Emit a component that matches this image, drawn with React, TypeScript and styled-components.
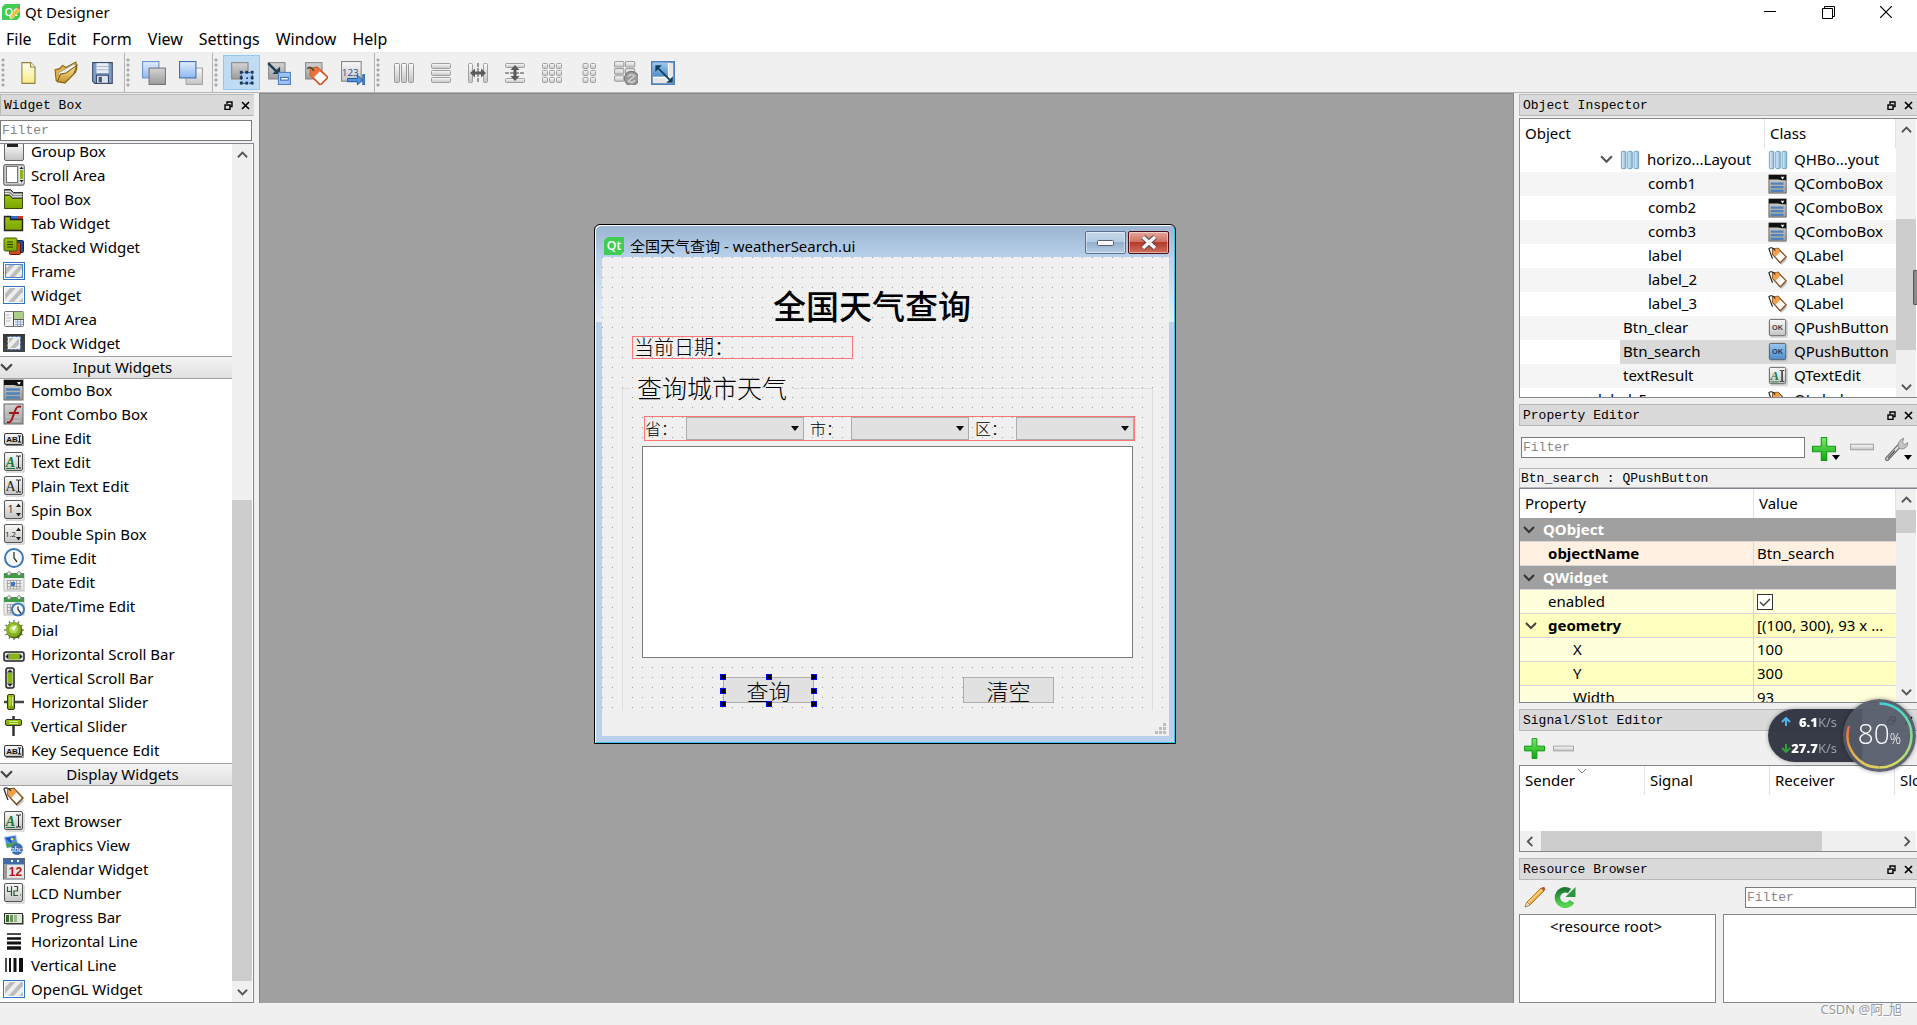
import React from 'react';
import styled, { createGlobalStyle, css } from 'styled-components';

const UI = '"Noto Sans", "Open Sans", "Noto Sans CJK SC", sans-serif';
const MONO = '"Liberation Mono", "DejaVu Sans Mono", "Noto Sans CJK SC", monospace';
const CJK = '"Noto Sans CJK SC", "Noto Sans", sans-serif';

const Global = createGlobalStyle`
  * { box-sizing: border-box; }
  html, body { margin: 0; padding: 0; height: 100%; }
  body { font-family: ${UI}; font-size: 15px; color: #000; background: #f0f0f0; overflow: hidden; }
  button, input, select, textarea { font: inherit; color: inherit; margin: 0; border-radius: 0; }
  button { padding: 0; border: 0; background: none; display: inline-flex; align-items: center; justify-content: center; }
  svg { display: block; flex: none; }
  ul { list-style: none; margin: 0; padding: 0; }
`;

/* ---------- drawings ---------- */

type Kids = { children?: React.ReactNode };
const Ic = ({ children, s = 22 }: Kids & { s?: number }) => (
  <svg width={s} height={s} viewBox="0 0 22 22" aria-hidden="true">{children}</svg>
);

const grad = (id: string, a: string, b: string, horizontal = false) => (
  <linearGradient id={id} x1="0" y1="0" x2={horizontal ? 1 : 0} y2={horizontal ? 0 : 1}>
    <stop offset="0" stopColor={a} /><stop offset="1" stopColor={b} />
  </linearGradient>
);

const HiddenSvg = styled.svg`position: absolute; pointer-events: none;`;
const Defs = () => (
  <HiddenSvg width="0" height="0" aria-hidden="true">
    <defs>
      {grad('gGrey', '#fafafa', '#c4c4c4')}
      {grad('gMid', '#d4d4d4', '#9c9c9c')}
      {grad('gDark', '#8a8a8a', '#d8d8d8')}
      {grad('gBlue', '#e2ecfb', '#8fb8f2')}
      {grad('gSky', '#9cc7ee', '#4d8bc9')}
      {grad('gCol', '#e4f2fb', '#7fb5da', true)}
      {grad('gGreen', '#7ce86c', '#08a808')}
      {grad('gLime', '#9ac40c', '#7ba400')}
      {grad('gGold', '#fbe9a8', '#c89427')}
      {grad('gPaper', '#fffef0', '#fbe985')}
      {grad('gReload', '#1a7a34', '#58d452')}
      <pattern id="pStripe" width="8" height="8" patternUnits="userSpaceOnUse" patternTransform="rotate(42)">
        <rect width="8" height="8" fill="#eee" /><rect width="4" height="8" fill="#bdbdbd" />
      </pattern>
      <linearGradient id="gRing" x1="0" y1="0" x2="0" y2="1">
        <stop offset="0" stopColor="#3fd6d0" /><stop offset=".6" stopColor="#8fe08a" /><stop offset="1" stopColor="#dcd860" />
      </linearGradient>
      <linearGradient id="gRing2" x1="0" y1="0" x2="0" y2="1">
        <stop offset="0" stopColor="#f0683c" /><stop offset="1" stopColor="#dcd05c" />
      </linearGradient>
    </defs>
  </HiddenSvg>
);

const Chevron = ({ dir = 'down', size = 12, color = '#555' }: { dir?: 'up' | 'down' | 'left' | 'right'; size?: number; color?: string }) => {
  const d = { up: 'M1 9L6 4L11 9', down: 'M1 3L6 8L11 3', left: 'M8 1L3 6L8 11', right: 'M4 1L9 6L4 11' }[dir];
  return <svg width={size} height={size} viewBox="0 0 12 12" aria-hidden="true"><path d={d} fill="none" stroke={color} strokeWidth="2" /></svg>;
};

const QtLogo = ({ pencil, w = 18 }: { pencil?: boolean; w?: number }) => (
  <svg width={w} height={w - 2} viewBox="0 0 18 16" aria-hidden="true">
    <path d="M3 0H18V13L15 16H0V3Z" fill="#41cd52" />
    <text x="9" y="12" fontSize="11" fontFamily="Open Sans, sans-serif" fontWeight="600" fill="#fff" textAnchor="middle">Qt</text>
    {pencil && <><path d="M15 4L18 6L11 14L8 15L9 11Z" fill="#f5b93c" stroke="#fff0c0" strokeWidth=".7" /><path d="M16 3L18 5" stroke="#d8694c" strokeWidth="2" /></>}
  </svg>
);

const Frame = ({ inner }: { inner?: boolean }) => (
  <Ic><rect x=".5" y="2.5" width="21" height="17" fill="#fff" stroke="#2f74c4" /><rect x="2" y="4" width="18" height="14" fill="url(#pStripe)" />{inner && <rect x="2.5" y="4.5" width="17" height="13" fill="none" stroke="#4c86cc" />}</Ic>
);
const Tile = ({ children, fill = 'url(#gGrey)' }: Kids & { fill?: string }) => (
  <Ic><path d="M3 21H21V3" fill="none" stroke="#bbb" /><rect x="1.5" y="1.5" width="18" height="18" rx="1.5" fill={fill} stroke="#555" />{children}</Ic>
);
const IBeam = () => <path d="M13 5h2q.5 0 .5 1v10q0 1-.5 1h-2M18 5h-2q-.5 0-.5 1v10q0 1 .5 1h2" fill="none" stroke="#222" strokeWidth="1" />;
const TextTile = ({ plain }: { plain?: boolean }) => (
  <Tile><text x="7.5" y="15.5" fontSize="14" textAnchor="middle" fontFamily="Liberation Serif, serif" fontStyle={plain ? 'normal' : 'italic'} fontWeight={plain ? 400 : 700} fill={plain ? '#222' : '#1d7a35'}>A</text>{!plain && <path d="M3 17.5H12" stroke="#1d7a35" />}<IBeam /></Tile>
);
const SpinTile = ({ t }: { t: string }) => (
  <Tile><text x="7.5" y="14" fontSize={t.length > 1 ? 8 : 10} textAnchor="middle" fontFamily="Open Sans, sans-serif" fill="#222">{t}</text><path d="M13 8L15.5 4.5L18 8ZM13 14L15.5 17.5L18 14Z" fill="#222" /></Tile>
);
const Abi = () => (
  <Ic><path d="M3 18.5H20.5V9" fill="none" stroke="#888" /><rect x="1.5" y="6.5" width="18" height="11" rx="1.5" fill="url(#gGrey)" stroke="#333" /><text x="9" y="14.5" fontSize="8" fontWeight="700" textAnchor="middle" fontFamily="Liberation Sans, sans-serif" fill="#111">AB</text><path d="M15 9h3M16.5 9v6M15 15h3" stroke="#111" /></Ic>
);
const Combo = () => (
  <Ic><rect x="1" y="1" width="19" height="20" fill="url(#gMid)" stroke="#666" /><path d="M1 1H20V7H15L11 6H1Z" fill="#111" /><path d="M14 3h4l-2 3Z" fill="#fff" /><path d="M3 10.5H17M3 14.5H17M3 18.5H17" stroke="#4e82b8" strokeWidth="2.5" /></Ic>
);
const FontCombo = () => (
  <Ic><rect x="1" y="1" width="19" height="20" fill="url(#gMid)" stroke="#666" /><path d="M3 10h14M3 14h14M3 18h14" stroke="#bdbdbd" strokeWidth="2" /><path d="M18 4q-4-2-6 4l-3 8q-1 4-5 3M6 10h10" fill="none" stroke="#a3161a" strokeWidth="2" /></Ic>
);
const Tag = () => (
  <Ic><path d="M6 9L11 5L21 15L15 21Z" fill="#999" opacity=".5" /><path d="M5 3L11 2.5L20 12L13.5 18.5L5 9Z" fill="#fff" stroke="#4a3018" strokeWidth="1.3" /><path d="M5 3L11 2.5L14 6L8 12L5 9Z" fill="#f0a04a" /><path d="M13 5L19.5 12L13.5 18L8 12" fill="none" stroke="#c8701c" /><path d="M8 5Q4 0 1 3Q3 9 5 14" fill="none" stroke="#222" strokeWidth="1.2" /></Ic>
);
const Clock = ({ x = 11, y = 11, r = 9 }: { x?: number; y?: number; r?: number }) => (
  <g><circle cx={x} cy={y} r={r} fill="#f4f6f8" stroke="#3c78b8" strokeWidth="2" /><path d={`M${x} ${y - r + 3}V${y}L${x + 3} ${y + 4}`} fill="none" stroke="#333" strokeWidth="1.3" /></g>
);
const CalBase = () => (
  <g><rect x="1" y="3" width="20" height="17" fill="#ececec" stroke="#bbb" /><rect x="1" y="2" width="20" height="5" fill="#3d9c45" /><circle cx="6" cy="2.5" r="1.8" fill="#eee" stroke="#888" /><circle cx="16" cy="2.5" r="1.8" fill="#eee" stroke="#888" /><path d="M3.5 9.5H18.5M3.5 12.5H18.5M3.5 15.5H18.5M3.5 18H18.5M4.5 9V18M7.5 9V18M10.5 9V18M13.5 9V18M17 9V18" stroke="#a9a9a9" /></g>
);
const Bars3 = ({ fill = 'url(#gGrey)', stroke = '#999' }: { fill?: string; stroke?: string }) => (
  <Ic><rect x="1.5" y="1.5" width="5" height="19" rx="1" fill={fill} stroke={stroke} /><rect x="8.5" y="1.5" width="5" height="19" rx="1" fill={fill} stroke={stroke} /><rect x="15.5" y="1.5" width="5" height="19" rx="1" fill={fill} stroke={stroke} /></Ic>
);
const Ok = ({ blue }: { blue?: boolean }) => (
  <Tile fill={blue ? 'url(#gSky)' : 'url(#gGrey)'}><text x="10.5" y="13" fontSize="8" fontWeight="700" textAnchor="middle" fontFamily="Liberation Sans, sans-serif" fill={blue ? '#173f66' : '#444'}>OK</text></Tile>
);
const Dial = () => {
  const ticks = Array.from({ length: 12 }, (_, i) => i * 30);
  return <Ic>{ticks.map(a => <path key={a} d="M11 1V4" stroke="#666" strokeWidth="1.2" transform={`rotate(${a} 11 11)`} />)}<circle cx="11.5" cy="11.5" r="8" fill="#4c6a0c" /><circle cx="10.5" cy="10.5" r="7.5" fill="#86b022" /><circle cx="10.5" cy="10" r="4.5" fill="#b2d858" /><path d="M8 9L14 6L11 12Z" fill="#fff" /></Ic>;
};

const icons: Record<string, React.ReactNode> = {
  group: <Ic><rect x="1.5" y="3.5" width="19" height="17" rx="1.5" fill="url(#gGrey)" stroke="#666" /><rect x="4" y="3" width="11" height="4" fill="#222" /></Ic>,
  scroll: <Ic><rect x=".7" y=".7" width="20.5" height="20.5" rx="1.5" fill="#c9c9c9" stroke="#555" /><rect x="3.5" y="2.5" width="11" height="16" fill="#fff" stroke="#777" /><rect x="16" y="2" width="4.5" height="17" fill="#e8e8e8" /><rect x="17" y="6" width="3" height="9" fill="#8ab414" /><path d="M16.5 5L18.5 2.5L20.5 5ZM16.5 16L18.5 18.5L20.5 16Z" fill="#222" /></Ic>,
  toolbox: <Ic><path d="M1.5 1.5h6l3 3h9v6H1.5Z" fill="#8d8d8d" stroke="#333" /><path d="M1.500 3.5h6l3 3h9M1.5 5.5h5l3 3h10" fill="none" stroke="#ddd" /><path d="M1.5 7.5h5l3 3h10v10h-18Z" fill="url(#gLime)" stroke="#3a4a08" /></Ic>,
  tab: <Ic><rect x="8" y="4" width="6" height="4" fill="#2d6cd0" /><rect x="14" y="4" width="6" height="4" fill="#d43a22" /><path d="M1.5 4.5h6v3h12v11h-18Z" fill="url(#gLime)" stroke="#222" strokeWidth="1.4" /></Ic>,
  stacked: <Ic><rect x="10.5" y="4.5" width="10" height="12" rx="1" fill="#1d50a8" stroke="#12264a" /><rect x="6.5" y="6.5" width="11" height="12" rx="1" fill="#d04a1a" stroke="#5a1c08" /><rect x="1" y="2" width="13" height="13" rx="1.5" fill="url(#gLime)" stroke="#44560a" /><path d="M4 6h6M4 8.5h6M4 11h6" stroke="#2d3a06" /></Ic>,
  frame: <Frame inner />,
  widget: <Frame />,
  mdi: <Ic><rect x="1.5" y="3.5" width="19" height="15" rx="1" fill="#f2f2f2" stroke="#777" /><rect x="11" y="4" width="9.5" height="7" fill="#a9cf88" /><path d="M10.5 4v14M11 11.5h9.5" stroke="#555" /><path d="M3 7h3M3 10h5M3 13h4" stroke="#bbb" /><path d="M12 14h8M12 16.5h8M14.5 12v6M17.5 12v6" stroke="#93a9d8" /></Ic>,
  dock: <Ic><rect y="2" width="22" height="18" fill="url(#gDark)" /><rect y="2" width="22" height="18" fill="#222" opacity=".8" /><rect x="4.5" y="4.5" width="13" height="13" fill="#eee" stroke="#2b62b4" strokeDasharray="2 2" /><rect x="6" y="6" width="10" height="10" fill="url(#pStripe)" /></Ic>,
  combo: <Combo />,
  fontcombo: <FontCombo />,
  abi: <Abi />,
  text: <TextTile />,
  plain: <TextTile plain />,
  spin: <SpinTile t="1" />,
  dspin: <SpinTile t="1.2" />,
  time: <Ic><Clock /></Ic>,
  date: <Ic><CalBase /><rect x="8" y="11" width="4" height="4" fill="#3c7ad0" /></Ic>,
  datetime: <Ic><CalBase /><Clock x={15} y={14.5} r={6} /></Ic>,
  dial: <Dial />,
  hscroll: <Ic><rect x="1" y="9" width="20" height="9" rx="2" fill="#ddd" stroke="#222" strokeWidth="1.5" /><rect x="6" y="10.5" width="10" height="6" fill="#8ab414" /><path d="M5.5 10.5v6L2.5 13.5ZM16.5 10.5v6L19.5 13.5Z" fill="#222" /></Ic>,
  vscroll: <Ic><rect x="3" y="1" width="8" height="20" rx="2" fill="#ddd" stroke="#222" strokeWidth="1.5" /><rect x="4.5" y="6" width="5" height="10" fill="#8ab414" /><path d="M4 5.5h6L7 2.5ZM4 16.5h6L7 19.5Z" fill="#222" /></Ic>,
  hslider: <Ic><path d="M1 11H21" stroke="#444" strokeWidth="2.5" /><rect x="4.5" y="3.5" width="7" height="15" rx="1.5" fill="url(#gLime)" stroke="#333" /><path d="M7 6v9M9.5 6v9" stroke="#d6ee8c" /></Ic>,
  vslider: <Ic><path d="M10.5 1V21" stroke="#333" strokeWidth="2.5" /><rect x="2.5" y="4.5" width="16" height="6" rx="1.5" fill="url(#gLime)" stroke="#333" /><path d="M6 6.5h9M6 8.5h9" stroke="#d6ee8c" /></Ic>,
  label: <Tag />,
  graphics: <Ic><path d="M1 3L13 1L15 11L4 14Z" fill="#4a90e0" stroke="#cfe2f6" /><path d="M2 4L12 2.5L8 9Z" fill="#1e50c8" /><circle cx="9" cy="5" r="1.5" fill="#f2e24c" /><path d="M3 10L14 8L15 11L4 14Z" fill="#4fa34a" /><circle cx="14" cy="15" r="6" fill="#3d6fae" /><text x="13" y="18" fontSize="9" fontStyle="italic" fontFamily="Liberation Serif, serif" textAnchor="middle" fill="#fff">abc</text></Ic>,
  calendar: <Ic><rect x=".5" y=".5" width="21" height="20.5" fill="#e6e6e6" stroke="#666" /><rect x="1" y="1" width="20" height="5.5" fill="#3f6ca8" /><path d="M8 3h2M14 3h2" stroke="#fff" strokeWidth="2" /><rect x="1" y="6" width="3" height="14.5" fill="#999" /><text x="12.5" y="18" fontSize="12" fontWeight="700" fontFamily="Liberation Sans, sans-serif" textAnchor="middle" fill="#b51616">12</text></Ic>,
  lcd: <Tile><path d="M4.5 4.5V9.5H8.5M8.5 4V14M11 4.5H14.5V9H11V13.5H15M17 13h1" fill="none" stroke="#2f5a2f" strokeWidth="1.2" /></Tile>,
  progress: <Ic><rect x="1.5" y="7.5" width="18" height="10" fill="#dfe6da" stroke="#333" /><path d="M4.5 9v7" stroke="#3b6b2c" strokeWidth="3" /><path d="M8.500 9v7" stroke="#6a9358" strokeWidth="3" /><path d="M12.5 9v7" stroke="#9cb892" strokeWidth="3" /><path d="M3 18.5h17.500V9" fill="none" stroke="#999" /></Ic>,
  hline: <Ic><path d="M4 4h14" stroke="#111" strokeWidth="1.5" /><path d="M4 8.5h14" stroke="#111" strokeWidth="2.5" /><path d="M4 13h14" stroke="#111" strokeWidth="3" /><path d="M4 18h14" stroke="#111" strokeWidth="3.5" /></Ic>,
  vline: <Ic><path d="M3 4v14" stroke="#111" strokeWidth="1.5" /><path d="M7 4v14" stroke="#111" strokeWidth="2" /><path d="M12 4v14" stroke="#111" strokeWidth="3" /><path d="M18 4v14" stroke="#111" strokeWidth="4" /></Ic>,
  hbox: <Bars3 fill="url(#gCol)" stroke="#6d9cbd" />,
  ok: <Ok />,
  okblue: <Ok blue />,
};

const grid = (cols: number[], rows: number[], w: number, h: number) =>
  cols.flatMap(x => rows.map(y => <rect key={`${x}-${y}`} x={x} y={y} width={w} height={h} rx="1" fill="url(#gGrey)" stroke="#a0a0a0" />));
const Gray = <rect x="1.5" y="1.5" width="15" height="15" fill="url(#gMid)" stroke="#8a8a8a" />;

const tool: Record<string, React.ReactNode> = {
  new: <Ic s={24}><path d="M4.5 1.5h8l4 4v15h-12Z" fill="url(#gPaper)" stroke="#8d8040" /><path d="M12.5 1.5v4h4" fill="#fff" stroke="#8d8040" /></Ic>,
  open: <Ic s={24}><path d="M1 8L5 7L8 4L11 6L20 1L21 6L20 10L10 20L2 18Z" fill="#e0b04c" stroke="#8a6416" /><path d="M4 11L18 3L20 4L19 9L6 16Z" fill="#f6f6f4" stroke="#999" strokeWidth=".7" /><path d="M3 19L6 12L11 11L21 4L18 12L10 20Z" fill="url(#gGold)" stroke="#8a6416" /></Ic>,
  save: <Ic s={24}><path d="M1.5 1.5h18v19h-16l-2-2Z" fill="#7f9cc6" stroke="#3d4d68" /><rect x="5" y="2" width="11" height="9" fill="#e9eef5" /><path d="M5 5h11M5 8h11" stroke="#a9b8cc" /><rect x="5" y="13" width="11" height="7.5" fill="#dde3ea" stroke="#37496a" /><rect x="7" y="14.5" width="3" height="5" fill="#42557a" /></Ic>,
  back: <Ic s={24}><rect x=".5" y=".5" width="15" height="15" fill="url(#gBlue)" stroke="#6b93cc" /><rect x="6.5" y="6.5" width="15" height="15" fill="url(#gMid)" stroke="#777" /></Ic>,
  front: <Ic s={24}><rect x="6.5" y="6.5" width="15" height="15" fill="url(#gGrey)" stroke="#a5a5a5" /><rect x=".5" y=".5" width="15" height="15" fill="url(#gBlue)" stroke="#3f6fb4" /></Ic>,
  edit: <Ic s={24}>{Gray}<rect x="10.5" y="10.5" width="10" height="10" fill="#a9cdf8" stroke="#2d5a96" strokeDasharray="2 1" />{[9, 14, 19].flatMap(x => [9, 14, 19].map(y => x === 14 && y === 14 ? <rect key="c" x="15" y="15" width="1.5" height="1.5" fill="#1f3558" /> : <rect key={`${x}${y}`} x={x} y={y} width="2.6" height="2.6" fill="#1f3558" />))}</Ic>,
  signals: <Ic s={24}>{Gray}<path d="M1 2L9 10" stroke="#223d5c" strokeWidth="2.200" /><path d="M12 12V5L5 12Z" fill="#223d5c" /><rect x="10.5" y="10.5" width="11" height="11" fill="#9dc3f4" stroke="#5580b8" /><rect x="12.500" y="15" width="7" height="2.500" fill="#fff" stroke="#3a6db0" /></Ic>,
  buddies: <Ic s={24}>{Gray}<path d="M6 7L12 6L22 15L15 22L6 13Z" fill="#fff" stroke="#d4541c" strokeWidth="1.6" /><path d="M6 7L12 6L15 9L8.5 15.5L6 13Z" fill="#e8743c" /><path d="M9 9Q6 4 3 7" fill="none" stroke="#444" strokeWidth="1.4" /></Ic>,
  taborder: <Ic s={24}><rect x=".5" y=".5" width="18" height="18" fill="url(#gGrey)" stroke="#888" /><text x="8.5" y="14" fontSize="9" textAnchor="middle" fontFamily="Open Sans, sans-serif" fill="#1f4f94">123</text><path d="M6 16h9v-3l5 4.5l-5 4.5v-3h-9ZM20 12.5h2v9.5h-2Z" fill="#4f94dc" stroke="#1f4f94" strokeWidth=".8" /></Ic>,
  lh: <Bars3 />,
  lv: <Ic>{grid([1.5], [1.5, 8.5, 15.5], 19, 5)}</Ic>,
  sh: <Ic>{grid([1.5, 16.5], [1.5], 4, 19)}<path d="M11 1v20" stroke="#999" strokeDasharray="4 1" strokeWidth="2" /><path d="M3 11L8 6.5V9.5H14V6.5L19 11L14 15.5V12.5H8V15.5Z" fill="#5a5a5a" /></Ic>,
  sv: <Ic>{grid([1.5], [1.5, 16.5], 19, 4)}<path d="M1 11h20" stroke="#999" strokeDasharray="4 1" strokeWidth="2" /><path d="M11 3L6.5 8H9.5V14H6.5L11 19L15.5 14H12.5V8H15.5Z" fill="#5a5a5a" /></Ic>,
  grid: <Ic>{grid([1.5, 8.5, 15.5], [1.5, 8.5, 15.5], 5, 5)}</Ic>,
  form: <Ic>{grid([5, 12.5], [1.5, 8.5, 15.5], 5, 5)}</Ic>,
  brk: <Ic s={24}>{grid([0.5, 10.5], [0.5, 7, 13.5], 8.5, 5)}<circle cx="16" cy="16" r="6.5" fill="#9a9a9a" stroke="#7c7c7c" /><path d="M12.5 19L19.500 13M13 14.5a3.5 3.5 0 0 1 5-1.5M19 17.5a3.5 3.5 0 0 1-5 1.5" fill="none" stroke="#d5d5d5" strokeWidth="1.3" /></Ic>,
  adjust: <Ic s={24}><rect x=".8" y=".8" width="20.4" height="20.4" fill="#e6e6e6" stroke="#3a72b4" strokeWidth="1.4" /><rect x="1.5" y="1.5" width="14" height="13" fill="url(#gSky)" /><path d="M16 2v18M2 15h18" stroke="#fff" /><path d="M6 6L17 17" stroke="#12405c" strokeWidth="1.600" /><path d="M4 4H10L4 10ZM20 20H14L20 14Z" fill="#12405c" /></Ic>,
};

const Plus = ({ s = 22 }: { s?: number }) => <Ic s={s}><path d="M8.5.5h5v8h8v5h-8v8h-5v-8h-8v-5h8Z" fill="url(#gGreen)" stroke="#159a15" /></Ic>;
const Minus = ({ s = 22 }: { s?: number }) => <Ic s={s}><rect x=".5" y="8.5" width="21" height="5" fill="url(#gGrey)" stroke="#a4a4a4" /></Ic>;
const Wrench = () => <Ic s={24}><path d="M3 20L14 8" stroke="#666" strokeWidth="4" strokeLinecap="round" /><path d="M3 20L14 8" stroke="#ddd" strokeWidth="2" strokeLinecap="round" /><path d="M3.5 19.5L10 12.5" stroke="#444" strokeWidth="1" /><path d="M13 9Q12 4 18 1L17 5L19 7L22 5Q22 11 15 11Z" fill="#c4c4c4" stroke="#888" strokeWidth=".8" /></Ic>;
const PencilIc = () => <Ic><path d="M1 21L3 16L17 2L20 5L6 19Z" fill="#f2ab3a" stroke="#9a6a1c" strokeWidth=".8" /><path d="M4 17L18 3.5" stroke="#fbd48a" strokeWidth="1.5" /><path d="M1 21L3 16L6 19Z" fill="#f5e2c0" stroke="#777" strokeWidth=".6" /><path d="M17 2q3-2 4 0t-1 3Z" fill="#b5543c" /></Ic>;
const Reload = () => <Ic><path d="M18 15.500A7.800 7.800 0 1 1 15.500 5" fill="none" stroke="url(#gReload)" strokeWidth="5.500" /><path d="M21.5 1V11H11.5Z" fill="#2d9440" /></Ic>;
const Caret = () => <svg width="8" height="5" viewBox="0 0 8 5" aria-hidden="true"><path d="M0 0H8L4 5Z" fill="#000" /></svg>;
const FloatIc = () => <svg width="9" height="9" viewBox="0 0 9 9" aria-hidden="true"><path d="M3 3V1H8V5.5H6M1 4H6V8.5H1Z" fill="none" stroke="#000" strokeWidth="1.4" /></svg>;
const CloseIc = () => <svg width="9" height="9" viewBox="0 0 9 9" aria-hidden="true"><path d="M1 1L8 8M8 1L1 8" stroke="#000" strokeWidth="1.7" /></svg>;

/* ---------- shell ---------- */

const Page = styled.div`display: flex; flex-direction: column; height: 100vh; background: #f0f0f0;`;
const TitleBar = styled.header`display: flex; align-items: center; height: 24px; padding: 0 2px; background: #fff;`;
const AppName = styled.h1`flex: 1; margin: 0 0 0 5px; font-size: 15px; font-weight: 400; line-height: 22px;`;
const SysButton = styled.button`width: 58px; height: 24px;`;
const MenuBar = styled.nav`display: flex; height: 29px; padding: 2px 0 0 6px; gap: 16px; background: #fff; border-bottom: 1px solid #ececec; font-size: 16px;`;
const MenuItem = styled.button`line-height: 24px;`;
const ToolBar = styled.div`display: flex; height: 40px; background: #f0f0f0; border-bottom: 1px solid #b4b4b4;`;
const ToolGroup = styled.div`
  display: flex; align-items: center; padding-right: 3px;
  & + & { border-left: 1px solid #b4b4b4; }
`;
const Grip = styled.span`width: 10px; height: 30px; background: radial-gradient(circle at 3px 2px, #a8a8a8 1px, transparent 2px) 0 0 / 11px 5px;`;
const ToolButton = styled.button<{ $on?: boolean }>`
  width: 37px; height: 35px; border: 1px solid transparent;
  ${p => p.$on && css`background: #c0dcf3; border-color: #90c8f6;`}
`;
const Workspace = styled.main`display: grid; grid-template-columns: 259px minmax(0, 1fr) 403px; flex: 1; min-height: 0;`;
const StatusBar = styled.footer`display: flex; justify-content: flex-end; height: 22px; padding: 0 15px; font-size: 13px; line-height: 12px; color: #9b9b9b; text-shadow: 1px 1px 0 #fff;`;

/* ---------- docks ---------- */

const LeftDock = styled.aside`display: flex; flex-direction: column; min-height: 0; padding: 1px 5px 0 0;`;
const RightDock = styled.aside`display: flex; flex-direction: column; min-height: 0; padding: 1px 0 0 5px; gap: 6px; overflow: hidden;`;
const Panel = styled.section<{ $grow?: boolean }>`display: flex; flex-direction: column; min-height: 0; flex: ${p => (p.$grow ? '1 1 0' : 'none')};`;
const DockBar = styled.div`display: flex; align-items: center; height: 22px; flex: none; padding: 0 4px 0 3px; gap: 8px; background: #dadada; border: 1px solid #b9b9b9; border-right-width: 0;`;
const DockName = styled.h2`flex: 1; margin: 0; padding-top: 2px; font-family: ${MONO}; font-size: 13px; font-weight: 400; line-height: 18px;`;
const DockTitle = ({ name }: { name: string }) => (
  <DockBar><DockName>{name}</DockName><button aria-label={`Float ${name}`}><FloatIc /></button><button aria-label={`Close ${name}`}><CloseIc /></button></DockBar>
);
const FilterBox = styled.input<{ $w?: string }>`
  width: ${p => p.$w || 'auto'}; flex: none; height: 21px; padding: 0 1px; border: 1px solid #7a7a7a; background: #fff; outline: 0;
  font-family: ${MONO}; font-size: 13px;
  &::placeholder { color: #868686; opacity: 1; }
`;
const WidgetFilter = styled(FilterBox)`margin: 4px 2px 2px 0;`;
const Sunken = styled.div<{ $h?: number; $mt?: number }>`
  display: flex; min-height: 0; overflow: hidden; background: #fff; border: 1px solid #828790; border-right-width: 0;
  ${p => (p.$h ? css`height: ${p.$h}px;` : css`flex: 1 1 0;`)}
  margin-top: ${p => p.$mt || 0}px;
`;
const WidgetTree = styled(Sunken)`border-width: 1px 1px 1px 0;`;
const WidgetList = styled.ul`display: flex; flex-direction: column; justify-content: flex-end; flex: 1; overflow: hidden;`;
const WidgetRow = styled.li`display: flex; align-items: center; flex: none; height: 24px; padding: 0 0 2px 3px; gap: 6px; line-height: 22px;`;
const GroupRow = styled.li`display: flex; align-items: center; flex: none; height: 23px; padding-bottom: 1px; line-height: 20px; border: solid #a0a0a0; border-width: 1px 0; background: linear-gradient(#f4f4f4, #e0e0e0);`;
const GroupName = styled.span`flex: 1; text-align: center;`;

const Bar = styled.div<{ $row?: boolean }>`display: flex; flex-direction: ${p => (p.$row ? 'row' : 'column')}; flex: none; background: #f0f0f0; margin-right: 1px; ${p => (p.$row ? 'height: 20px; margin-top: auto;' : 'width: 20px;')}`;
const BarButton = styled.button`width: 20px; height: 20px; flex: none;`;
const Space = styled.span<{ $n: number }>`flex: ${p => p.$n} 1 0;`;
const Thumb = styled(Space)`background: #cdcdcd;`;
const ScrollBar = ({ row, parts }: { row?: boolean; parts: [number, number, number] }) => (
  <Bar $row={row}>
    <BarButton aria-label="Scroll back"><Chevron dir={row ? 'left' : 'up'} size={11} /></BarButton>
    <Space $n={parts[0]} /><Thumb $n={parts[1]} /><Space $n={parts[2]} />
    <BarButton aria-label="Scroll forward"><Chevron dir={row ? 'right' : 'down'} size={11} /></BarButton>
  </Bar>
);

const widgets: [string, string?][] = [
  ['Group Box', 'group'], ['Scroll Area', 'scroll'], ['Tool Box', 'toolbox'], ['Tab Widget', 'tab'], ['Stacked Widget', 'stacked'],
  ['Frame', 'frame'], ['Widget', 'widget'], ['MDI Area', 'mdi'], ['Dock Widget', 'dock'],
  ['Input Widgets'],
  ['Combo Box', 'combo'], ['Font Combo Box', 'fontcombo'], ['Line Edit', 'abi'], ['Text Edit', 'text'], ['Plain Text Edit', 'plain'],
  ['Spin Box', 'spin'], ['Double Spin Box', 'dspin'], ['Time Edit', 'time'], ['Date Edit', 'date'], ['Date/Time Edit', 'datetime'],
  ['Dial', 'dial'], ['Horizontal Scroll Bar', 'hscroll'], ['Vertical Scroll Bar', 'vscroll'], ['Horizontal Slider', 'hslider'],
  ['Vertical Slider', 'vslider'], ['Key Sequence Edit', 'abi'],
  ['Display Widgets'],
  ['Label', 'label'], ['Text Browser', 'text'], ['Graphics View', 'graphics'], ['Calendar Widget', 'calendar'], ['LCD Number', 'lcd'],
  ['Progress Bar', 'progress'], ['Horizontal Line', 'hline'], ['Vertical Line', 'vline'], ['OpenGL Widget', 'widget'],
];

/* ---------- tables ---------- */

const Table = styled.table`
  flex: 1; align-self: flex-start; min-width: 0; table-layout: fixed; border-collapse: separate; border-spacing: 0; line-height: 23px;
  th, td { padding: 0; font-weight: 400; text-align: left; white-space: nowrap; overflow: hidden; }
  thead th { height: 29px; padding-left: 5px; border-right: 1px solid #e2e2e2; background: #fff; }
`;
const ObjRow = styled.tr<{ $alt?: boolean }>`td { height: 24px; background: ${p => (p.$alt ? '#f5f5f5' : '#fff')}; }`;
const Cell = styled.div<{ $indent?: number; $sel?: boolean; $gap?: number }>`
  display: flex; align-items: center; height: 24px; gap: ${p => p.$gap ?? 7}px; margin-left: ${p => p.$indent || 0}px; padding: 0 0 1px 3px;
  background: ${p => (p.$sel ? '#d9d9d9' : 'transparent')};
  > svg[width="22"] { width: 20px; height: 20px; }
`;
const objects: { n: string; c: string; i: string; x: number; sel?: boolean }[] = [
  { n: 'comb1', c: 'QComboBox', i: 'combo', x: 125 }, { n: 'comb2', c: 'QComboBox', i: 'combo', x: 125 }, { n: 'comb3', c: 'QComboBox', i: 'combo', x: 125 },
  { n: 'label', c: 'QLabel', i: 'label', x: 125 }, { n: 'label_2', c: 'QLabel', i: 'label', x: 125 }, { n: 'label_3', c: 'QLabel', i: 'label', x: 125 },
  { n: 'Btn_clear', c: 'QPushButton', i: 'ok', x: 100 }, { n: 'Btn_search', c: 'QPushButton', i: 'okblue', x: 100, sel: true },
  { n: 'textResult', c: 'QTextEdit', i: 'text', x: 100 }, { n: 'label_5', c: 'QLabel', i: 'label', x: 75 },
];

const PropTools = styled.div`display: flex; align-items: center; height: 42px; padding-left: 2px; gap: 6px;`;
const MenuTool = styled.button`align-items: flex-end; width: 30px; height: 28px; svg + svg { margin: 0 0 1px -4px; }`;
const PlainTool = styled.button`width: 30px; height: 28px;`;
const ObjectInfo = styled.div`height: 20px; flex: none; padding-left: 1px; border: 1px solid #b9b9b9; border-right: 0; font-family: ${MONO}; font-size: 13px; line-height: 19px;`;
const PropHead = styled.tr`td { height: 24px; padding-left: 3px; background: #a0a0a0; border-bottom: 1px solid #d6d6dc; }`;
const HeadCell = styled.div`display: flex; align-items: center; gap: 8px; font-weight: 700; color: #fff; line-height: 23px;`;
const PropRow = styled.tr<{ $bg: string }>`
  td { height: 24px; background: ${p => p.$bg}; border-bottom: 1px solid #d6d6dc; }
  td:first-child { border-right: 1px solid #d6d6dc; }
  td + td { padding-left: 3px; }
`;
const PropName = styled.div<{ $x: number; $bold?: boolean }>`display: flex; align-items: center; gap: 11px; padding-left: ${p => p.$x}px; font-weight: ${p => (p.$bold ? 700 : 400)};`;
const Check = styled.input`appearance: none; display: block; width: 16px; height: 16px; border: 1px solid #333; background: #fff;`;
const CheckBox = styled.label`display: grid; width: 16px; height: 16px; > * { grid-area: 1 / 1; z-index: 0; } svg { pointer-events: none; }`;

const ToolRow = styled.div`display: flex; align-items: center; height: 34px; padding: 0 1px 0 5px; gap: 8px; > input { margin-left: auto; }`;
const Column = styled(Sunken)`flex-direction: column;`;
const SlotTable = styled(Table)`flex: none; width: 500px;`;
const SortMark = styled.span`position: absolute; left: 57px; top: 3px;`;
const SortHead = styled.th`position: relative;`;
const Split = styled.div`display: flex; gap: 7px; height: 89px;`;
const ResTree = styled.ul`width: 197px; border: 1px solid #828790; background: #fff; padding-left: 30px; line-height: 23px;`;
const ResView = styled.div`flex: 1; border: 1px solid #828790; border-right: 0; background: #fff;`;

/* ---------- form window ---------- */

const Mdi = styled.div`position: relative; overflow: hidden; background: #a0a0a0; border: 1px solid #828790; border-bottom: 0;`;
const SubWindow = styled.section`
  position: absolute; left: 334px; top: 130px; width: 582px; display: flex; flex-direction: column;
  padding: 0 6px 7px 7px; border: 1px solid #000; border-radius: 6px 6px 0 0;
  background: linear-gradient(#99b4d1, #b9d1ea 32px, #e4edf8 97px, #b9d1ea 97px);
  box-shadow: inset 1px 1px 0 #fff, inset -1px -1px 0 #3bc6e8;
`;
const WinTitle = styled.div`display: flex; height: 32px; padding: 6px 0 0 2px; gap: 2px;`;
const WinName = styled.h2`display: flex; flex: 1; align-items: center; margin: 0; gap: 6px; font-size: 15px; font-weight: 400; padding-top: 3px;`;
const WinButton = styled.button<{ $close?: boolean }>`
  width: 41px; height: 23px; border: 1px solid ${p => (p.$close ? '#4c1018' : '#5a6f8a')}; border-radius: 2px;
  box-shadow: inset 0 0 0 1px rgba(255, 255, 255, .45);
  background: ${p => (p.$close ? 'linear-gradient(#e7a79c, #cf6f60 48%, #b53a28 50%, #d0705f)' : 'linear-gradient(#c7d8ea, #b4cae0 48%, #94afcb 50%, #b5cce4)')};
`;
const Canvas = styled.div`
  height: 454px; padding: 28px 16px 0 20px; display: flex; flex-direction: column;
  background: linear-gradient(transparent 1px, #f0f0f0 1px) 0 0 / 100% 10px, linear-gradient(90deg, #a0a0a0 1px, transparent 1px) 0 0 / 10px 10px, #f0f0f0;
`;
const FormTitle = styled.h3`margin: 0 0 11px 151px; font: 500 33px/40px ${CJK};`;
const DateLabel = styled.div`width: 221px; height: 23px; margin-left: 10px; padding-left: 1px; border: 1px solid #f77; font: 300 20px/20px ${CJK};`;
const Group = styled.fieldset`margin: 14px 0 0; padding: 0 19px; border: 1px solid #dcdcdc; border-bottom: 0; min-width: 0; flex: 1;`;
const Legend = styled.legend`margin-left: -12px; padding: 0 6px 2px 7px; font: 300 25px/28px ${CJK};`;
const ComboRow = styled.div`display: flex; gap: 6px; width: 491px; height: 25px; margin: 13px 0 0 2px; border: 1px solid #f77; font: 300 16px/22px ${CJK};`;
const ComboLabel = styled.label`width: 35px; white-space: nowrap;`;
const ComboWrap = styled.div`display: grid; flex: 1; align-items: center; > * { grid-area: 1 / 1; } > svg { justify-self: end; margin-right: 5px; pointer-events: none; z-index: 1; }`;
const Select = styled.select`appearance: none; width: 100%; height: 23px; border: 1px solid #adadad; background: #e1e1e1;`;
const Result = styled.textarea`display: block; width: 491px; height: 212px; margin-top: 5px; border: 1px solid #7a7a7a; background: #fff; resize: none;`;
const Actions = styled.div`display: flex; gap: 149px; padding: 19px 0 0 81px;`;
const PushButton = styled.button`width: 91px; height: 26px; border: 1px solid #adadad; background: #e1e1e1; font: 300 22px/24px ${CJK};`;
const Selected = styled.div`position: relative;`;
const Handle = styled.i<{ $x: number; $y: number }>`
  position: absolute; left: ${p => p.$x}%; top: ${p => p.$y}%; width: 6px; height: 6px; margin: -3px; background: #000; border: 1px solid #00f;
`;
const FormStatus = styled.div`display: flex; align-items: flex-end; justify-content: flex-end; height: 25px; padding: 2px 3px; background: #f0f0f0;`;

/* ---------- net speed gadget ---------- */

const Gadget = styled.div`position: fixed; left: calc(100% - 149px); top: 699px; display: flex; align-items: center; color: #fff; font-family: "Noto Sans", sans-serif;`;
const Pill = styled.div`width: 94px; height: 53px; padding: 0 0 0 13px; border-radius: 27px 0 0 27px; background: #2f333ff5; box-shadow: 0 0 4px #0005;`;
const Speed = styled.div`display: flex; align-items: center; height: 26px; width: 56px; font: 700 13px/26px "Noto Sans", sans-serif; small { font-weight: 400; font-size: 13px; color: #9a9da6; } b { flex: 1; text-align: right; }`;
const Disc = styled.div`display: grid; place-items: center; width: 73px; height: 73px; margin-left: -19px; border-radius: 50%; background: #555a69ee; box-shadow: 0 0 4px #0006; > * { grid-area: 1 / 1; }`;
const Percent = styled.span`font: 300 28px/32px "Open Sans", "Noto Sans", sans-serif; small { font-size: 14px; }`;
const EdgeHandle = styled.div`position: fixed; right: 0; top: 270px; width: 4px; height: 35px; border: 1px solid #555; border-right: 0; border-radius: 2px 0 0 2px; background: #8a8a8a;`;
const Arrow = ({ up }: { up?: boolean }) => <svg width="10" height="10" viewBox="0 0 10 10" aria-hidden="true"><path d={up ? 'M5 9V2M1 5L5 1L9 5' : 'M5 1V8M1 5L5 9L9 5'} fill="none" stroke={up ? '#4fb4f0' : '#2f9e3c'} strokeWidth="2" /></svg>;

const toolGroups: string[][] = [['new', 'open', 'save'], ['back', 'front'], ['edit', 'signals', 'buddies', 'taborder'], ['lh', 'lv', 'sh', 'sv', 'grid', 'form', 'brk', 'adjust']];

const ComboField = ({ id, label }: { id: string; label: string }) => (
  <>
    <ComboLabel htmlFor={id}>{label}</ComboLabel>
    <ComboWrap><Select id={id}><option value="" /></Select><svg width="8" height="5" viewBox="0 0 8 5" aria-hidden="true"><path d="M0 0H8L4 5Z" /></svg></ComboWrap>
  </>
);

const FormWindow = () => (
  <SubWindow>
    <WinTitle>
      <WinName><QtLogo w={20} />全国天气查询 - weatherSearch.ui</WinName>
      <WinButton aria-label="Minimize form"><svg width="17" height="6" viewBox="0 0 17 6"><rect x=".5" y=".5" width="16" height="5" rx="1" fill="#f8f8f8" stroke="#54606e" /></svg></WinButton>
      <WinButton $close aria-label="Close form"><svg width="18" height="15" viewBox="0 0 18 15"><path d="M3 2L15 13M15 2L3 13" stroke="#5c4a50" strokeWidth="5.5" /><path d="M3 2L15 13M15 2L3 13" stroke="#f4f4f4" strokeWidth="3.5" /></svg></WinButton>
    </WinTitle>
    <Canvas>
      <FormTitle>全国天气查询</FormTitle>
      <DateLabel>当前日期：</DateLabel>
      <Group>
        <Legend>查询城市天气</Legend>
        <ComboRow><ComboField id="province" label="省：" /><ComboField id="city" label="市：" /><ComboField id="district" label="区：" /></ComboRow>
        <Result aria-label="textResult" />
        <Actions>
          <Selected>
            <PushButton>查询</PushButton>
            {[[0, 0], [50, 0], [100, 0], [0, 50], [100, 50], [0, 100], [50, 100], [100, 100]].map(([x, y]) => <Handle key={`${x}-${y}`} $x={x} $y={y} />)}
          </Selected>
          <PushButton>清空</PushButton>
        </Actions>
      </Group>
    </Canvas>
    <FormStatus><svg width="11" height="11" viewBox="0 0 11 11"><path d="M8 0h3v3H8ZM4 4h3v3H4ZM8 4h3v3H8ZM0 8h3v3H0ZM4 8h3v3H4ZM8 8h3v3H8Z" fill="#bdbdbd" /></svg></FormStatus>
  </SubWindow>
);

export default function App() {
  return (
    <Page>
      <Global />
      <Defs />
      <TitleBar>
        <QtLogo pencil />
        <AppName>Qt Designer</AppName>
        <SysButton aria-label="Minimize"><svg width="12" height="12" viewBox="0 0 12 12"><path d="M0 5.5H12" stroke="#000" /></svg></SysButton>
        <SysButton aria-label="Restore"><svg width="13" height="13" viewBox="0 0 13 13"><path d="M.5 2.5H10.5V12.5H.5ZM2.5 2V.5H12.5V10.5H11" fill="none" stroke="#000" /></svg></SysButton>
        <SysButton aria-label="Close"><svg width="12" height="12" viewBox="0 0 12 12"><path d="M0 0L12 12M12 0L0 12" stroke="#000" strokeWidth="1.2" /></svg></SysButton>
      </TitleBar>
      <MenuBar>{['File', 'Edit', 'Form', 'View', 'Settings', 'Window', 'Help'].map(m => <MenuItem key={m}>{m}</MenuItem>)}</MenuBar>
      <ToolBar>
        {toolGroups.map(g => (
          <ToolGroup key={g[0]}><Grip />{g.map(t => <ToolButton key={t} aria-label={t} $on={t === 'edit'}>{tool[t]}</ToolButton>)}</ToolGroup>
        ))}
      </ToolBar>

      <Workspace>
        <LeftDock>
          <DockTitle name="Widget Box" />
          <WidgetFilter aria-label="Filter widgets" placeholder="Filter" />
          <WidgetTree>
            <WidgetList>
              {widgets.map(([name, icon]) => icon
                ? <WidgetRow key={name}>{icons[icon]}{name}</WidgetRow>
                : <GroupRow key={name}><Chevron size={13} color="#444" /><GroupName>{name}</GroupName></GroupRow>)}
            </WidgetList>
            <ScrollBar parts={[335, 480, 1]} />
          </WidgetTree>
        </LeftDock>

        <Mdi><FormWindow /></Mdi>

        <RightDock>
          <Panel>
            <DockTitle name="Object Inspector" />
            <Sunken $h={280} $mt={2}>
              <Table>
                <colgroup><col width="245" /><col /></colgroup>
                <thead><tr><th>Object</th><th>Class</th></tr></thead>
                <tbody>
                  <ObjRow>
                    <td><Cell $indent={77}><Chevron size={13} />{icons.hbox}horizo...Layout</Cell></td>
                    <td><Cell $gap={6}>{icons.hbox}QHBo...yout</Cell></td>
                  </ObjRow>
                  {objects.map((o, i) => (
                    <ObjRow key={o.n} $alt={i % 2 === 0}>
                      <td><Cell $indent={o.x} $sel={o.sel}>{o.n}</Cell></td>
                      <td><Cell $gap={6} $sel={o.sel}>{icons[o.i]}{o.c}</Cell></td>
                    </ObjRow>
                  ))}
                </tbody>
              </Table>
              <ScrollBar parts={[80, 131, 27]} />
            </Sunken>
          </Panel>

          <Panel $grow>
            <DockTitle name="Property Editor" />
            <PropTools>
              <FilterBox $w="284px" aria-label="Filter properties" placeholder="Filter" />
              <MenuTool aria-label="Add dynamic property"><Plus s={24} /><Caret /></MenuTool>
              <PlainTool aria-label="Remove dynamic property"><Minus s={24} /></PlainTool>
              <MenuTool aria-label="Configure"><Wrench /><Caret /></MenuTool>
            </PropTools>
            <ObjectInfo>Btn_search : QPushButton</ObjectInfo>
            <Sunken>
              <Table>
                <colgroup><col width="234" /><col /></colgroup>
                <thead><tr><th>Property</th><th>Value</th></tr></thead>
                <tbody>
                  <PropHead><td colSpan={2}><HeadCell><Chevron color="#333" />QObject</HeadCell></td></PropHead>
                  <PropRow $bg="#fff0e1"><td><PropName $x={28} $bold>objectName</PropName></td><td>Btn_search</td></PropRow>
                  <PropHead><td colSpan={2}><HeadCell><Chevron color="#333" />QWidget</HeadCell></td></PropHead>
                  <PropRow $bg="#ffffdc">
                    <td><PropName $x={28}>enabled</PropName></td>
                    <td><CheckBox><Check type="checkbox" defaultChecked aria-label="enabled" /><svg width="16" height="16" viewBox="0 0 16 16"><path d="M3 8L6.5 11.5L13 5" fill="none" stroke="#444" strokeWidth="1.5" /></svg></CheckBox></td>
                  </PropRow>
                  <PropRow $bg="#ffffbf"><td><PropName $x={5} $bold><Chevron color="#444" />geometry</PropName></td><td>[(100, 300), 93 x ...</td></PropRow>
                  <PropRow $bg="#ffffdc"><td><PropName $x={53}>X</PropName></td><td>100</td></PropRow>
                  <PropRow $bg="#ffffbf"><td><PropName $x={53}>Y</PropName></td><td>300</td></PropRow>
                  <PropRow $bg="#ffffdc"><td><PropName $x={53}>Width</PropName></td><td>93</td></PropRow>
                </tbody>
              </Table>
              <ScrollBar parts={[1, 23, 149]} />
            </Sunken>
          </Panel>

          <Panel>
            <DockTitle name="Signal/Slot Editor" />
            <ToolRow><button aria-label="Add connection"><Plus s={21} /></button><button aria-label="Remove connection"><Minus s={21} /></button></ToolRow>
            <Column $h={87}>
              <SlotTable>
                <thead><tr><SortHead>Sender<SortMark><svg width="10" height="5" viewBox="0 0 10 5"><path d="M1 0L5 4L9 0" fill="none" stroke="#777" /></svg></SortMark></SortHead><th>Signal</th><th>Receiver</th><th>Slot</th></tr></thead>
              </SlotTable>
              <ScrollBar row parts={[1, 281, 74]} />
            </Column>
          </Panel>

          <Panel>
            <DockTitle name="Resource Browser" />
            <ToolRow>
              <button aria-label="Edit resources"><PencilIc /></button><button aria-label="Reload"><Reload /></button>
              <FilterBox $w="171px" aria-label="Filter resources" placeholder="Filter" />
            </ToolRow>
            <Split><ResTree><li>&lt;resource root&gt;</li></ResTree><ResView /></Split>
          </Panel>
        </RightDock>
      </Workspace>
      <StatusBar>CSDN @阿_旭</StatusBar>

      <EdgeHandle />
      <Gadget>
        <Pill>
          <Speed><Arrow up /><b>6.1</b><small>K/s</small></Speed>
          <Speed><Arrow /><b>27.7</b><small>K/s</small></Speed>
        </Pill>
        <Disc>
          <svg width="73" height="73" viewBox="0 0 73 73" aria-hidden="true">
            <path d="M36.5 4.5A32 32 0 0 1 36.5 68.5" fill="none" stroke="url(#gRing)" strokeWidth="2.5" />
            <path d="M36.5 68.5A32 32 0 0 1 6 27" fill="none" stroke="url(#gRing2)" strokeWidth="2.5" />
          </svg>
          <Percent>80<small>%</small></Percent>
        </Disc>
      </Gadget>
    </Page>
  );
}
